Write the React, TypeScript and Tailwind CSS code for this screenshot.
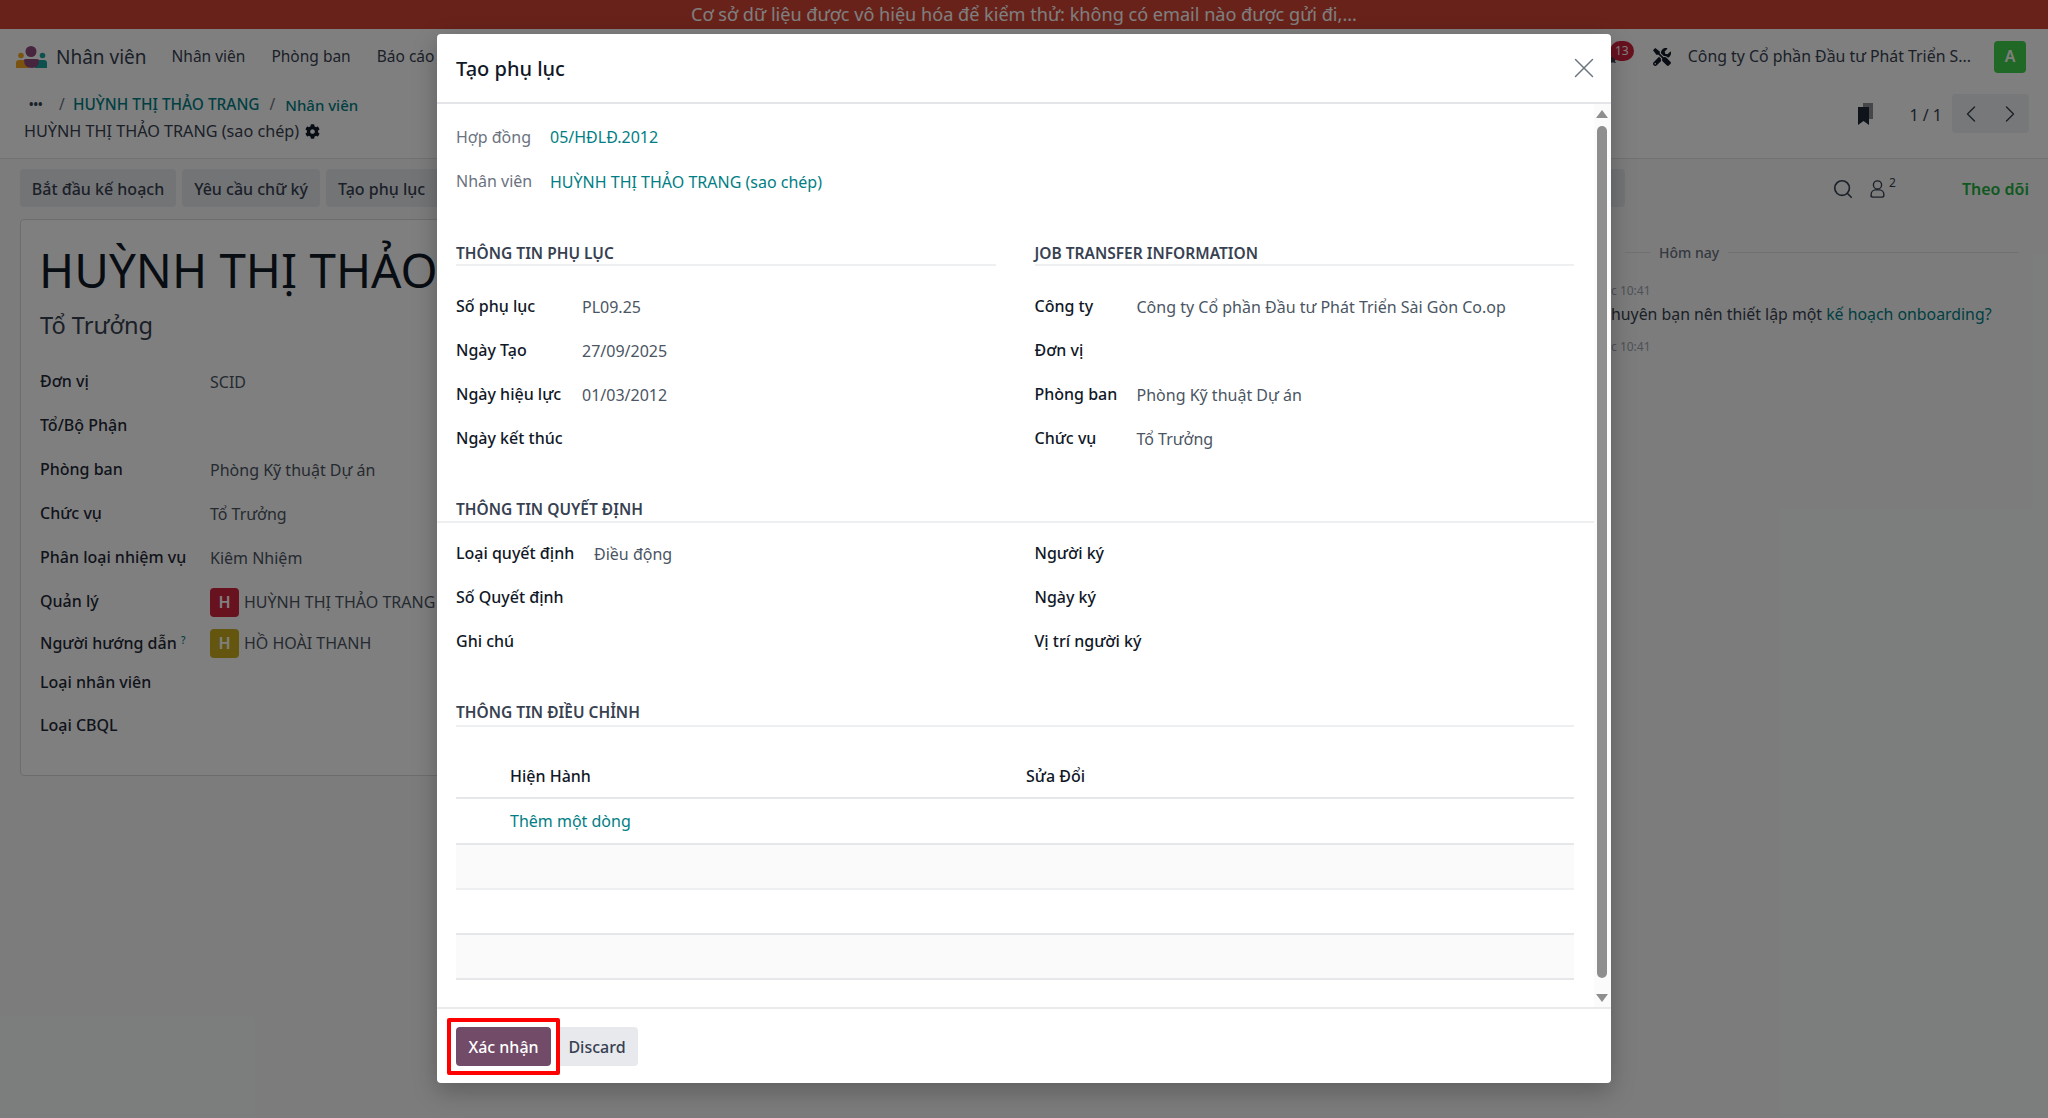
import { ChevronLeft, ChevronRight, Search, X } from 'lucide-react';
import { FaCog, FaComments, FaTools } from 'react-icons/fa';

const font = { fontFamily: '"Noto Sans", sans-serif' };

function SheetRow({ label, value, h = 'h-[44px]' }: { label: string; value?: string; h?: string }) {
  return (
    <div className={`flex items-center ${h}`}>
      <div className="w-[170px] pb-[2px] font-medium text-[#1f2937]">{label}</div>
      <div className="text-[#4b5563]">{value}</div>
    </div>
  );
}

function Field({ label, value, w }: { label: string; value?: string; w: string }) {
  return (
    <div className="flex items-center h-[44px] text-[16px]">
      <div className={`${w} shrink-0 whitespace-nowrap font-medium text-[#111827]`}>{label}</div>
      <div className="text-[#4b5563] pt-[2px] whitespace-nowrap">{value}</div>
    </div>
  );
}

function SectionTitle({ children, className = '' }: { children: string; className?: string }) {
  return (
    <div className={`border-b-2 border-[#eeeff1] font-semibold text-[#374151] text-[15.5px] leading-[24px] ${className}`}>
      {children}
    </div>
  );
}

export default function App() {
  return (
    <div className="relative w-[2048px] h-[1118px] overflow-hidden bg-[#f8f9f9] text-[16px]" style={font}>
      {/* page behind the dialog */}
      <div className="h-[29px] bg-[#d14535] flex items-center justify-center text-white text-[18.1px]">
        Cơ sở dữ liệu được vô hiệu hóa để kiểm thử: không có email nào được gửi đi,...
      </div>
      <div className="h-[56px] bg-white flex items-center pl-[16px] pr-[22px] text-[#374151] text-[15.5px]">
        <svg width="32" height="22" viewBox="0 0 32 22" className="mr-[8px]">
          <circle cx="5" cy="9.5" r="2.8" fill="#f5a623" />
          <circle cx="26.5" cy="9.5" r="2.8" fill="#1ba39c" />
          <path d="M0 22v-5q0-3 3-3h7q3 0 3 3v5z" fill="#f5a623" />
          <path d="M19 22v-5q0-3 3-3h6q3 0 3 3v5z" fill="#1ba39c" />
          <path d="M8 14q0-1 2-1h10q3 0 3 1q0 8-7 8q-8 0-8-8z" fill="#8f4a7c" />
          <circle cx="15" cy="5.5" r="5.5" fill="#8f4a7c" />
        </svg>
        <span className="text-[19px] mr-[25px]">Nhân viên</span>
        <span className="mr-[26px]">Nhân viên</span>
        <span className="mr-[26px]">Phòng ban</span>
        <span>Báo cáo</span>
        <div className="ml-auto relative flex items-center text-[15.85px]">
          <FaComments className="absolute left-[-55px] top-[6px] w-[18px] h-[18px] text-[#374151]" />
          <div className="absolute left-[-43px] top-0 w-[24px] h-[20px] rounded-full bg-[#d0223f] text-white text-[12px] flex items-center justify-center">13</div>
          <FaTools className="w-[18px] h-[18px] text-[#111827] mr-[17px]" />
          <span className="whitespace-nowrap text-[#374151]">Công ty Cổ phần Đầu tư Phát Triển S...</span>
          <div className="ml-[23px] w-[32px] h-[32px] rounded-[4px] bg-[#3ed04a] text-white font-semibold flex items-center justify-center">A</div>
        </div>
      </div>
      <div className="h-[74px] bg-white border-b border-[#dee2e6] flex pl-[24px] pr-[19px]">
        <div>
          <div className="h-[34px] flex items-center pl-[5px] pt-[6px] text-[#017e84] font-medium text-[15.4px]">
            <span className="text-[#374151] font-bold text-[12px] w-[30px]">•••</span>
            <span className="text-[#6b7280] w-[14px] font-normal">/</span>
            <span>HUỲNH THỊ THẢO TRANG</span>
            <span className="text-[#6b7280] px-[10px] font-normal">/</span>
            <span className="text-[15px]">Nhân viên</span>
          </div>
          <div className="flex items-center gap-[6px] text-[#374151] text-[16.2px]">
            HUỲNH THỊ THẢO TRANG (sao chép)
            <FaCog className="w-[15px] h-[15px] text-[#111827]" />
          </div>
        </div>
        <div className="ml-auto flex items-start pt-[9px]">
          <svg width="20" height="22" viewBox="0 0 20 22" className="mr-[32px] mt-[9px]">
            <path d="M6 0h10v16h-10z" fill="#8b8f94" />
            <path d="M1 4h11v18l-5.5-4-5.5 4z" fill="#1f2937" />
          </svg>
          <span className="text-[#374151] mr-[10px] mt-[9px]">1 / 1</span>
          <div className="flex h-[39px] rounded-[4px] bg-[#eff0f2] gap-px">
            <div className="w-[38px] flex items-center justify-center"><ChevronLeft className="w-[28px] h-[28px] text-[#374151]" strokeWidth={1.2} /></div>
            <div className="w-[38px] flex items-center justify-center"><ChevronRight className="w-[28px] h-[28px] text-[#374151]" strokeWidth={1.2} /></div>
          </div>
        </div>
      </div>
      <div className="flex">
        <div className="w-[1625px] pl-[20px]">
          <div className="flex gap-[6px] pt-[10px] h-[60px] font-medium text-[#374151]">
            <div className="h-[38px] w-[156px] pt-[2px] rounded-[4px] bg-[#e7e9ed] flex items-center justify-center">Bắt đầu kế hoạch</div>
            <div className="h-[38px] w-[138px] pt-[2px] rounded-[4px] bg-[#e7e9ed] flex items-center justify-center">Yêu cầu chữ ký</div>
            <div className="h-[38px] flex-1 pt-[2px] rounded-[4px] bg-[#e7e9ed] pl-[12px] flex items-center">Tạo phụ lục</div>
          </div>
          <div className="w-[1000px] h-[557px] border border-[#d8dadd] rounded-[4px] bg-white pl-[19px] pt-[18px]">
            <div className="text-[47.5px] leading-[64px] text-[#111827] whitespace-nowrap -ml-[1px]">HUỲNH THỊ THẢO TRANG</div>
            <div className="text-[23.6px] leading-[34px] mt-[6px] mb-[18px] text-[#374151]">Tổ Trưởng</div>
            <SheetRow label="Đơn vị" value="SCID" />
            <SheetRow label="Tổ/Bộ Phận" />
            <SheetRow label="Phòng ban" value="Phòng Kỹ thuật Dự án" />
            <SheetRow label="Chức vụ" value="Tổ Trưởng" />
            <SheetRow label="Phân loại nhiệm vụ" value="Kiêm Nhiệm" />
            <div className="flex items-center h-[44px]">
              <div className="w-[170px] pb-[2px] font-medium text-[#1f2937]">Quản lý</div>
              <div className="w-[29px] h-[29px] rounded-[4px] bg-[#d0223f] text-white font-semibold flex items-center justify-center mr-[5px]">H</div>
              <div className="text-[#4b5563] whitespace-nowrap">HUỲNH THỊ THẢO TRANG</div>
            </div>
            <div className="flex items-center h-[38px]">
              <div className="w-[170px] font-medium text-[#1f2937]">Người hướng dẫn <sup className="text-[#017e84] text-[10px]">?</sup></div>
              <div className="w-[29px] h-[29px] rounded-[4px] bg-[#c8ac1e] text-white font-semibold flex items-center justify-center mr-[5px]">H</div>
              <div className="text-[#4b5563]">HỒ HOÀI THANH</div>
            </div>
            <SheetRow label="Loại nhân viên" h="h-[42px]" />
            <SheetRow label="Loại CBQL" />
          </div>
        </div>
        <div className="flex-1 pr-[19px] pt-[10px]">
          <div className="h-[38px] pt-[2px] flex items-center justify-end text-[#374151]">
            <Search className="w-[22px] h-[22px] mr-[14px]" strokeWidth={1.8} />
            <svg width="19" height="20" viewBox="0 0 20 22" fill="none" stroke="currentColor" strokeWidth="1.5" className="mr-[2px]">
              <circle cx="10" cy="6.5" r="4.5" />
              <path d="M3 20v-3a5 5 0 0 1 5-5h4a5 5 0 0 1 5 5v1a2 2 0 0 1-2 2H5a2 2 0 0 1-2-2z" />
            </svg>
            <sup className="text-[12px] mr-[66px]">2</sup>
            <span className="text-[#1fb040] font-semibold">Theo dõi</span>
          </div>
          <div className="flex items-center gap-[9px] mt-[35px] mr-[10px] text-[14px] text-[#6b7280] font-medium">
            <div className="w-[25px] border-t border-[#dee2e6]" />
            Hôm nay
            <div className="flex-1 border-t border-[#dee2e6]" />
          </div>
          <div className="-ml-[14px] text-[12px] text-[#9ca3af] mt-[19px] whitespace-nowrap">c 10:41</div>
          <div className="-ml-[14px] text-[#374151] text-[15.85px] mt-[3px] whitespace-nowrap">huyên bạn nên thiết lập một <span className="text-[#017e84]">kế hoạch onboarding?</span></div>
          <div className="-ml-[14px] text-[12px] text-[#9ca3af] mt-[11px] whitespace-nowrap">c 10:41</div>
        </div>
      </div>

      {/* backdrop */}
      <div className="absolute inset-0 bg-black/50" />

      {/* dialog */}
      <div className="absolute left-[437px] top-[34px] w-[1174px] h-[1049px] bg-white rounded-[4px] shadow-[0_8px_24px_rgba(0,0,0,0.25)] flex flex-col">
        <div className="h-[70px] shrink-0 border-b-2 border-[#e3e5e8] flex items-center justify-between pl-[19px] pr-[10px]">
          <div className="text-[20px] pt-[2px] font-medium text-[#111827]">Tạo phụ lục</div>
          <X className="w-[34px] h-[34px] text-[#6b7280]" strokeWidth={1} />
        </div>
        <div className="flex-1 min-h-0 flex">
          <div className="flex-1 min-w-0">
            <div className="pl-[19px] pr-[20px] pt-[11px]">
              <div className="flex items-center h-[44px]">
                <div className="w-[94px] text-[#6b7280]">Hợp đồng</div>
                <div className="text-[#017e84]">05/HĐLĐ.2012</div>
              </div>
              <div className="flex items-center h-[44px]">
                <div className="w-[94px] text-[#6b7280]">Nhân viên</div>
                <div className="text-[#017e84] pt-[1px]">HUỲNH THỊ THẢO TRANG (sao chép)</div>
              </div>
              <div className="grid grid-cols-2 gap-x-[39px] mt-[38px]">
                <div>
                  <SectionTitle className="h-[25px]">THÔNG TIN PHỤ LỤC</SectionTitle>
                  <div className="pt-[18px]">
                    <Field label="Số phụ lục" value="PL09.25" w="w-[126px]" />
                    <Field label="Ngày Tạo" value="27/09/2025" w="w-[126px]" />
                    <Field label="Ngày hiệu lực" value="01/03/2012" w="w-[126px]" />
                    <Field label="Ngày kết thúc" w="w-[126px]" />
                  </div>
                </div>
                <div>
                  <SectionTitle className="h-[25px]">JOB TRANSFER INFORMATION</SectionTitle>
                  <div className="pt-[18px]">
                    <Field label="Công ty" value="Công ty Cổ phần Đầu tư Phát Triển Sài Gòn Co.op" w="w-[102px]" />
                    <Field label="Đơn vị" w="w-[102px]" />
                    <Field label="Phòng ban" value="Phòng Kỹ thuật Dự án" w="w-[102px]" />
                    <Field label="Chức vụ" value="Tổ Trưởng" w="w-[102px]" />
                  </div>
                </div>
              </div>
            </div>
            <SectionTitle className="mt-[37px] pl-[19px] h-[26px]">THÔNG TIN QUYẾT ĐỊNH</SectionTitle>
            <div className="pl-[19px] pr-[20px] pt-[8px]">
              <div className="grid grid-cols-2 gap-x-[39px]">
                <div>
                  <Field label="Loại quyết định" value="Điều động" w="w-[138px]" />
                  <Field label="Số Quyết định" w="w-[138px]" />
                  <Field label="Ghi chú" w="w-[138px]" />
                </div>
                <div>
                  <Field label="Người ký" w="w-[102px]" />
                  <Field label="Ngày ký" w="w-[102px]" />
                  <Field label="Vị trí người ký" w="w-[102px]" />
                </div>
              </div>
              <SectionTitle className="mt-[37px] h-[27px]">THÔNG TIN ĐIỀU CHỈNH</SectionTitle>
              <div className="mt-[29px] h-[43px] pb-[2px] border-b-2 border-[#e5e7eb] flex items-center font-medium text-[#111827]">
                <div className="w-[515px] pl-[54px]">Hiện Hành</div>
                <div className="pl-[55px]">Sửa Đổi</div>
              </div>
              <div className="h-[46px] border-b-2 border-[#e5e7eb] flex items-center pl-[54px] text-[#017e84]">Thêm một dòng</div>
              <div className="h-[45px] border-b-2 border-[#eeeff1] bg-[#fafafa]" />
              <div className="h-[45px] border-b-2 border-[#e5e7eb]" />
              <div className="h-[45px] border-b-2 border-[#e5e7eb] bg-[#fafafa]" />
            </div>
          </div>
          {/* scrollbar */}
          <div className="w-[17px] shrink-0 bg-[#fbfbfb] flex flex-col items-center pl-[1px] pr-[3px] pt-[6px] pb-[5px]">
            <div className="w-0 h-0 border-x-[6px] border-x-transparent border-b-[8px] border-b-[#8e8e8e]" />
            <div className="w-[10px] flex-1 mt-[8px] mb-[16px] rounded-full bg-[#8e8e8e]" />
            <div className="w-0 h-0 border-x-[6px] border-x-transparent border-t-[8px] border-t-[#8e8e8e]" />
          </div>
        </div>
        <div className="relative h-[76px] shrink-0 border-t-2 border-[#e9eaec] flex items-start pt-[18px] pl-[19px] gap-[5px] font-medium">
          <div className="w-[95px] h-[39px] rounded-[4px] bg-[#714b67] text-white flex items-center justify-center">Xác nhận</div>
          <div className="w-[82px] h-[39px] rounded-[4px] bg-[#e7e9ed] text-[#374151] flex items-center justify-center">Discard</div>
          {/* red highlight box from the annotated screenshot */}
          <div className="absolute left-[10px] top-[9px] w-[113px] h-[57px] border-[4px] border-[#ff0000] rounded-[2px]" />
        </div>
      </div>
    </div>
  );
}
